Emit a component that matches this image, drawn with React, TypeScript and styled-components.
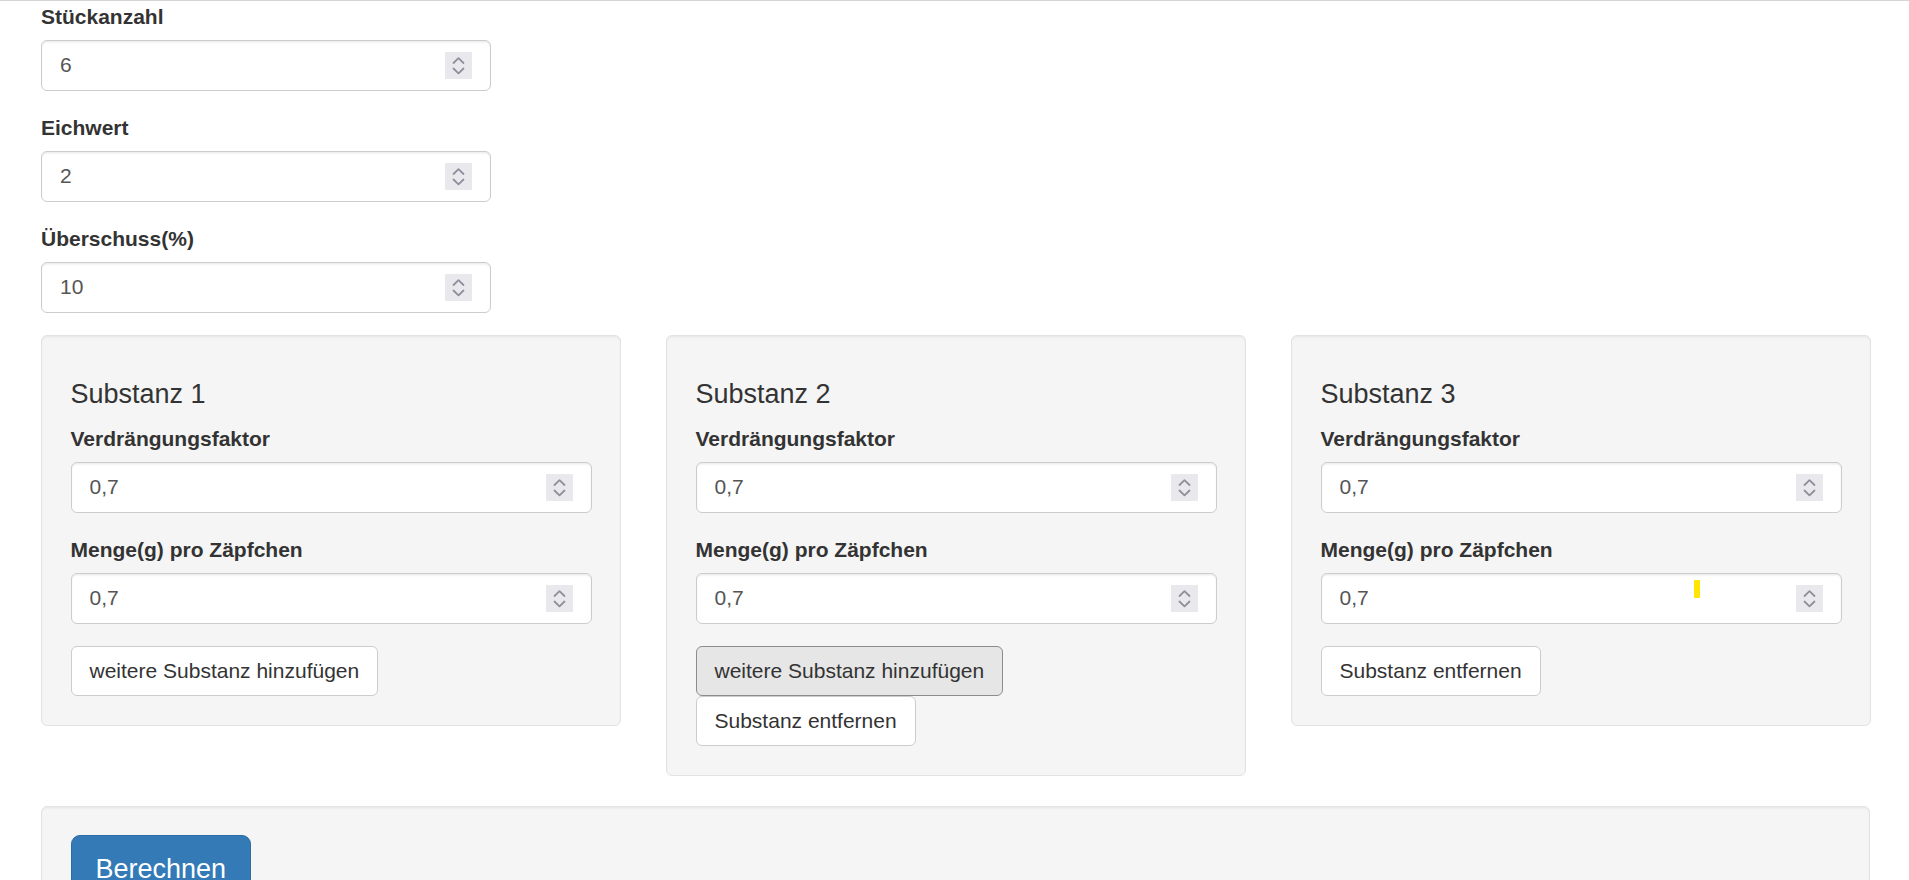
import React from "react";
import styled, { createGlobalStyle } from "styled-components";

const GlobalStyle = createGlobalStyle`
  html, body {
    margin: 0;
    padding: 0;
    background: #fff;
    overflow: hidden;
  }
  body {
    font-family: "Liberation Sans", Arial, Helvetica, sans-serif;
    font-size: 21px;
    line-height: 1.42857;
    color: #333;
  }
  *, *::before, *::after {
    box-sizing: border-box;
  }
`;

const Page = styled.div`
  border-top: 1px solid #d5d5d5;
  padding: 1px 39px 0 41px;
`;

const FormGroup = styled.div`
  margin-bottom: 22.5px;
`;

const Label = styled.label`
  display: block;
  font-weight: 700;
  line-height: 30px;
  margin-bottom: 7.5px;
  color: #333;
`;

const InputBox = styled.div<{ $width?: string }>`
  position: relative;
  display: flex;
  align-items: center;
  width: ${(p) => p.$width ?? "100%"};
  height: 51px;
  padding: 0 18px;
  background: #fff;
  border: 1px solid #ccc;
  border-radius: 6px;
  box-shadow: inset 0 1.5px 1.5px rgba(0, 0, 0, 0.075);
`;

const ValueInput = styled.input`
  flex: 1;
  min-width: 0;
  border: none;
  outline: none;
  background: transparent;
  padding: 0;
  font-family: inherit;
  font-size: 21px;
  line-height: 30px;
  color: #555;
`;

const Spinner = styled.span`
  flex: none;
  display: flex;
  width: 27px;
  height: 27px;
  background: #e9e9ed;
`;

const Marker = styled.span`
  position: absolute;
  left: 372px;
  top: 6px;
  width: 6px;
  height: 18px;
  border-radius: 1px;
  background: #ffe500;
`;

const SubstanceRow = styled.div`
  display: grid;
  grid-template-columns: repeat(3, 580px);
  column-gap: 45px;
  align-items: start;
`;

const Well = styled.div`
  background: #f5f5f5;
  border: 1px solid #e3e3e3;
  border-radius: 6px;
  padding: 28.5px;
  margin-bottom: 30px;
  box-shadow: inset 0 1.5px 1.5px rgba(0, 0, 0, 0.05);
`;

const SubstanceTitle = styled.h4`
  margin: 15px 0;
  font-size: 27px;
  font-weight: 500;
  line-height: 1.1;
  color: #333;
`;

const ButtonStack = styled.div`
  display: flex;
  flex-direction: column;
  align-items: flex-start;
`;

const DefaultButton = styled.button<{ $active?: boolean }>`
  font-family: inherit;
  font-size: 21px;
  line-height: 30px;
  padding: 9px 18px;
  color: #333;
  background: ${(p) => (p.$active ? "#e6e6e6" : "#fff")};
  border: 1px solid ${(p) => (p.$active ? "#8c8c8c" : "#ccc")};
  border-radius: 6px;
  white-space: nowrap;
  cursor: pointer;
`;

const PrimaryButton = styled.button`
  font-family: inherit;
  font-size: 27px;
  line-height: 36px;
  padding: 15px 24px;
  color: #fff;
  background: #337ab7;
  border: 1px solid #2e6da4;
  border-radius: 9px;
  cursor: pointer;
`;

const SpinIcon = () => (
  <svg width="27" height="27" viewBox="0 0 27 27" fill="none">
    <path
      d="M8.5 11 L13.5 6.2 L18.5 11"
      stroke="#8e8e9c"
      strokeWidth="1.8"
      strokeLinecap="round"
      strokeLinejoin="round"
    />
    <path
      d="M8.5 16.5 L13.5 21.3 L18.5 16.5"
      stroke="#8e8e9c"
      strokeWidth="1.8"
      strokeLinecap="round"
      strokeLinejoin="round"
    />
  </svg>
);

type NumberFieldProps = {
  label: string;
  value: string;
  width?: string;
  marker?: boolean;
};

const NumberField = ({ label, value, width, marker }: NumberFieldProps) => (
  <FormGroup>
    <Label>{label}</Label>
    <InputBox $width={width}>
      <ValueInput type="text" defaultValue={value} />
      {marker && <Marker />}
      <Spinner>
        <SpinIcon />
      </Spinner>
    </InputBox>
  </FormGroup>
);

type Substance = {
  n: number;
  add: boolean;
  addActive?: boolean;
  remove: boolean;
  marker?: boolean;
};

const substances: Substance[] = [
  { n: 1, add: true, remove: false },
  { n: 2, add: true, addActive: true, remove: true },
  { n: 3, add: false, remove: true, marker: true },
];

export default function App() {
  return (
    <>
      <GlobalStyle />
      <Page>
        <NumberField label="Stückanzahl" value="6" width="450px" />
        <NumberField label="Eichwert" value="2" width="450px" />
        <NumberField label="Überschuss(%)" value="10" width="450px" />
        <SubstanceRow>
          {substances.map((s) => (
            <Well key={s.n}>
              <SubstanceTitle>Substanz {s.n}</SubstanceTitle>
              <NumberField label="Verdrängungsfaktor" value="0,7" />
              <NumberField
                label="Menge(g) pro Zäpfchen"
                value="0,7"
                marker={s.marker}
              />
              <ButtonStack>
                {s.add && (
                  <DefaultButton $active={s.addActive}>
                    weitere Substanz hinzufügen
                  </DefaultButton>
                )}
                {s.remove && <DefaultButton>Substanz entfernen</DefaultButton>}
              </ButtonStack>
            </Well>
          ))}
        </SubstanceRow>
        <Well>
          <PrimaryButton>Berechnen</PrimaryButton>
        </Well>
      </Page>
    </>
  );
}
